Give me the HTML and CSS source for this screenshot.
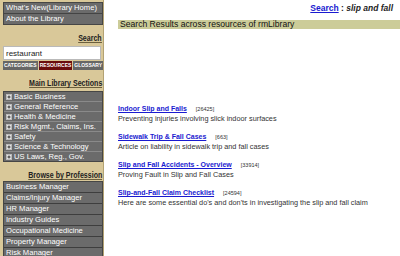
FILE: index.html
```html
<!DOCTYPE html>
<html lang="en">
<head>
  <meta charset="UTF-8">
  <title>rmLibrary - Search</title>
  <link rel="stylesheet" href="styles.css">
</head>
<body>
  <div class="page">
    <div class="sidebar">
      <ul class="menu top-menu">
        <li>What's New(Library Home)</li>
        <li>About the Library</li>
      </ul>

      <div class="side-head"><span>Search</span></div>
      <input class="search-input" type="text" value="restaurant">
      <div class="search-tabs">
        <span class="tab">CATEGORIES</span>
        <span class="tab active">RESOURCES</span>
        <span class="tab">GLOSSARY</span>
      </div>

      <div class="side-head"><span>Main Library Sections</span></div>
      <ul class="menu sections">
        <li><svg class="plus" width="6" height="6" viewBox="0 0 6 6"><rect x="0.5" y="0.5" width="5" height="5" fill="#e6e6e6" stroke="#bbb"/><path d="M1.5 3h3M3 1.5v3" stroke="#333" stroke-width="1"/></svg>Basic Business</li>
        <li><svg class="plus" width="6" height="6" viewBox="0 0 6 6"><rect x="0.5" y="0.5" width="5" height="5" fill="#e6e6e6" stroke="#bbb"/><path d="M1.5 3h3M3 1.5v3" stroke="#333" stroke-width="1"/></svg>General Reference</li>
        <li><svg class="plus" width="6" height="6" viewBox="0 0 6 6"><rect x="0.5" y="0.5" width="5" height="5" fill="#e6e6e6" stroke="#bbb"/><path d="M1.5 3h3M3 1.5v3" stroke="#333" stroke-width="1"/></svg>Health &amp; Medicine</li>
        <li><svg class="plus" width="6" height="6" viewBox="0 0 6 6"><rect x="0.5" y="0.5" width="5" height="5" fill="#e6e6e6" stroke="#bbb"/><path d="M1.5 3h3M3 1.5v3" stroke="#333" stroke-width="1"/></svg>Risk Mgmt., Claims, Ins.</li>
        <li><svg class="plus" width="6" height="6" viewBox="0 0 6 6"><rect x="0.5" y="0.5" width="5" height="5" fill="#e6e6e6" stroke="#bbb"/><path d="M1.5 3h3M3 1.5v3" stroke="#333" stroke-width="1"/></svg>Safety</li>
        <li><svg class="plus" width="6" height="6" viewBox="0 0 6 6"><rect x="0.5" y="0.5" width="5" height="5" fill="#e6e6e6" stroke="#bbb"/><path d="M1.5 3h3M3 1.5v3" stroke="#333" stroke-width="1"/></svg>Science &amp; Technology</li>
        <li><svg class="plus" width="6" height="6" viewBox="0 0 6 6"><rect x="0.5" y="0.5" width="5" height="5" fill="#e6e6e6" stroke="#bbb"/><path d="M1.5 3h3M3 1.5v3" stroke="#333" stroke-width="1"/></svg>US Laws, Reg., Gov.</li>
      </ul>

      <div class="side-head"><span>Browse by Profession</span></div>
      <ul class="menu professions">
        <li>Business Manager</li>
        <li>Claims/Injury Manager</li>
        <li>HR Manager</li>
        <li>Industry Guides</li>
        <li>Occupational Medicine</li>
        <li>Property Manager</li>
        <li>Risk Manager</li>
      </ul>
    </div>

    <div class="content">
      <div class="query"><a href="#">Search</a> : <i>slip and fall</i></div>
      <div class="results-bar">Search Results across resources of rmLibrary</div>

      <div class="results">
        <div class="result">
          <div class="result-title"><a href="#">Indoor Slip and Falls</a><span class="count">[26425]</span></div>
          <div class="result-desc">Preventing injuries involving slick indoor surfaces</div>
        </div>
        <div class="result">
          <div class="result-title"><a href="#">Sidewalk Trip &amp; Fall Cases</a><span class="count">[663]</span></div>
          <div class="result-desc">Article on liability in sidewalk trip and fall cases</div>
        </div>
        <div class="result">
          <div class="result-title"><a href="#">Slip and Fall Accidents - Overview</a><span class="count">[33914]</span></div>
          <div class="result-desc">Proving Fault in Slip and Fall Cases</div>
        </div>
        <div class="result">
          <div class="result-title"><a href="#">Slip-and-Fall Claim Checklist</a><span class="count">[24594]</span></div>
          <div class="result-desc">Here are some essential do's and don'ts in investigating the slip and fall claim</div>
        </div>
      </div>
    </div>
  </div>
</body>
</html>
```

FILE: styles.css
```css
body { margin: 0; background: #fff; font-family: "Liberation Sans", Arial, sans-serif; overflow: hidden; }
.page { display: flex; height: 256px; }

/* left column */
.sidebar { width: 100px; padding: 2px 0 0 3px; background: #d9c899; border-right: 1px solid #b3a273; flex-shrink: 0; }
.menu { list-style: none; margin: 0; padding: 0; background: #6b6b6b; border: 1px solid #464646; color: #fff; font-size: 7.6px; }
.menu li { line-height: 9px; height: 9px; padding-left: 2px; white-space: nowrap; border-top: 1px solid #8a8a8a; }
.menu li:first-child { border-top: none; }
.top-menu li { height: 10px; line-height: 10px; border-top: 1px solid #444; }
.top-menu li:first-child { border-top: none; }

/* headers are a narrow bold face in the original */
.side-head { text-align: right; font-size: 8.6px; font-weight: bold; color: #222; line-height: 8px; margin-top: 9px; padding-right: 1px; }
.side-head span { display: inline-block; border-bottom: 1px solid #6b5f3d; transform: scaleX(0.82); transform-origin: right; }

.search-input { display: block; box-sizing: border-box; width: 98px; height: 14px; margin: 3px 0 1px; padding: 0 2px; border: 1px solid #b9b9b9; font: 8px "Liberation Sans", Arial, sans-serif; color: #222; }
.search-tabs { display: flex; gap: 1px; }
.tab { background: #666; color: #fff; font-size: 5px; font-weight: bold; line-height: 9px; text-align: center; overflow: hidden; }
.tab.active { background: #6a0d0d; }
.search-tabs .tab:first-child { flex: 34; }
.search-tabs .tab:nth-child(2) { flex: 33; }
.search-tabs .tab:last-child { flex: 29; }

.sections { margin-top: 3px; }
.sections li { display: flex; align-items: center; gap: 2px; padding-left: 2px; }
.plus { flex-shrink: 0; }

.professions { margin-top: 1px; border-bottom: none; }
.professions li { height: 10px; line-height: 10px; border-top: 1px solid #3e3e3e; }
.professions li:first-child { border-top: none; }

/* results column */
.content { flex: 1; padding: 3px 0 0 14px; font-size: 7.5px; color: #222; }
.query { text-align: right; font-size: 8.5px; font-weight: bold; line-height: 10px; padding-right: 7px; }
.query a { color: #1a1ad0; }
.results-bar { margin-top: 7px; background: #cccc99; line-height: 9px; padding-left: 2px; color: #111; font-size: 8.6px; }

.results { margin-top: 75px; }
.result { margin-bottom: 9px; }
.result-title { line-height: 9px; }
.result-title a { color: #1a1ad0; font-weight: bold; font-size: 7px; }
.count { font-size: 5.5px; color: #333; margin-left: 9px; }
.result-desc { line-height: 9px; color: #333; font-size: 7.3px; }
```
